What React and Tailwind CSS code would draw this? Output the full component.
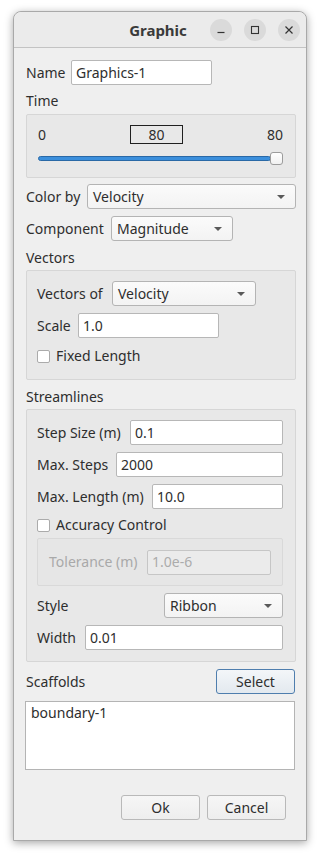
import React from "react";

const FONT = { fontFamily: '"Noto Sans", "Open Sans", sans-serif' };

function Arrow() {
  return (
    <svg width="8" height="4" viewBox="0 0 8 4" className="shrink-0">
      <polygon points="0,0 8,0 4,4" fill="#5a5a5a" />
    </svg>
  );
}

function Combo({ value, className = "" }) {
  return (
    <div
      className={
        "h-[25px] flex items-center justify-between pl-[5px] pr-[10px] rounded-[3px] border border-[#b4b4b4] bg-gradient-to-b from-[#fbfbfb] to-[#f3f3f3] text-[#2e2e2e] " +
        className
      }
    >
      <span>{value}</span>
      <Arrow />
    </div>
  );
}

function Input({ value, className = "" }) {
  return (
    <div
      className={
        "h-[25px] flex items-center pl-[4px] rounded-[2px] border border-[#b7b7b7] bg-white text-[#2e2e2e] " +
        className
      }
    >
      {value}
    </div>
  );
}

function Check({ label }) {
  return (
    <div className="h-[18px] flex items-center gap-[6px]">
      <div className="w-[13px] h-[13px] rounded-[2px] border border-[#ababab] bg-white" />
      <span>{label}</span>
    </div>
  );
}

function Row({ label, labelW, children, className = "" }) {
  return (
    <div className={"flex items-center h-[25px] " + className}>
      <div className={"shrink-0 " + labelW}>{label}</div>
      {children}
    </div>
  );
}

function Btn({ children, className = "" }) {
  return (
    <div
      className={
        "h-[25px] w-[79px] flex items-center justify-center rounded-[3px] border " +
        className
      }
    >
      {children}
    </div>
  );
}

export default function App() {
  return (
    <div className="min-h-screen bg-white pt-[11px] pl-[13px]" style={FONT}>
      <div className="w-[294px] h-[830px] rounded-t-[8px] border border-[#a9a9a9] bg-[#efefef] flex flex-col shadow-[0_2px_9px_rgba(0,0,0,0.35)] text-[14px] leading-[18px] text-[#2e2e2e]">
        {/* title bar */}
        <div className="h-[36px] shrink-0 border-b border-[#c3c3c3] rounded-t-[8px] bg-[#ebebeb] flex items-center">
          <div className="flex-1 pl-[92px] text-center font-bold text-[15px] text-[#3a3a3a]">
            Graphic
          </div>
          <div className="flex items-center gap-[12px] pr-[6px]">
            <div className="w-[22px] h-[22px] rounded-full bg-[#dadada] flex items-center justify-center">
              <svg width="10" height="10" viewBox="0 0 10 10">
                <line x1="1.5" y1="7.5" x2="8.5" y2="7.5" stroke="#333" strokeWidth="1.2" />
              </svg>
            </div>
            <div className="w-[22px] h-[22px] rounded-full bg-[#dadada] flex items-center justify-center">
              <svg width="10" height="10" viewBox="0 0 10 10">
                <rect x="1.5" y="1.5" width="7" height="7" fill="none" stroke="#333" strokeWidth="1.1" />
              </svg>
            </div>
            <div className="w-[22px] h-[22px] rounded-full bg-[#dadada] flex items-center justify-center">
              <svg width="10" height="10" viewBox="0 0 10 10">
                <path d="M1.5 1.5 L8.5 8.5 M8.5 1.5 L1.5 8.5" stroke="#333" strokeWidth="1.2" />
              </svg>
            </div>
          </div>
        </div>

        {/* content */}
        <div className="flex flex-col pl-[12px] pr-[10px]">
          <Row label="Name" labelW="w-[45px]" className="mt-[12px]">
            <Input value="Graphics-1" className="w-[141px] pl-[3px]" />
          </Row>

          <div className="mt-[7px] h-[18px]">Time</div>
          <div className="mt-[4px] h-[64px] border border-[#d6d6d6] rounded-[2px] bg-[#e8e8e8] pt-[10px] pl-[11px] pr-[12px]">
            <div className="flex items-center h-[19px]">
              <div className="w-[92px]">0</div>
              <div className="w-[53px] h-[19px] border border-[#202020] flex items-center justify-center">
                80
              </div>
              <div className="flex-1 text-right">80</div>
            </div>
            <div className="mt-[8px] h-[13px] flex items-center">
              <div className="flex-1 h-[5px] rounded-full bg-[#3b8fdc] border border-[#2a69a6]" />
              <div className="w-[13px] h-[13px] -ml-[1px] rounded-[3px] border border-[#9c9c9c] bg-gradient-to-b from-white to-[#f1f1f1]" />
            </div>
          </div>

          <Row label="Color by" labelW="w-[61px]" className="mt-[6px]">
            <Combo value="Velocity" className="flex-1" />
          </Row>
          <Row label="Component" labelW="w-[85px]" className="mt-[7px]">
            <Combo value="Magnitude" className="w-[122px]" />
          </Row>

          <div className="mt-[8px] h-[18px]">Vectors</div>
          <div className="mt-[3px] h-[110px] border border-[#d6d6d6] rounded-[2px] bg-[#e8e8e8] pt-[10px] pl-[10px] pr-[12px] flex flex-col">
            <Row label="Vectors of" labelW="w-[75px]">
              <Combo value="Velocity" className="w-[144px]" />
            </Row>
            <Row label="Scale" labelW="w-[41px]" className="mt-[7px]">
              <Input value="1.0" className="w-[141px]" />
            </Row>
            <div className="mt-[9px]">
              <Check label="Fixed Length" />
            </div>
          </div>

          <div className="mt-[8px] h-[18px]">Streamlines</div>
          <div className="mt-[3px] h-[253px] border border-[#d6d6d6] rounded-[2px] bg-[#e8e8e8] pt-[10px] pl-[10px] pr-[12px] flex flex-col">
            <Row label="Step Size (m)" labelW="w-[93px]">
              <Input value="0.1" className="flex-1" />
            </Row>
            <Row label="Max. Steps" labelW="w-[79px]" className="mt-[7px]">
              <Input value="2000" className="flex-1" />
            </Row>
            <Row label="Max. Length (m)" labelW="w-[115px]" className="mt-[7px]">
              <Input value="10.0" className="flex-1" />
            </Row>
            <div className="mt-[7px]">
              <Check label="Accuracy Control" />
            </div>
            <div className="mt-[4px] h-[48px] border border-[#d9d9d9] rounded-[2px] bg-[#e6e6e6] flex items-center pl-[11px] pr-[11px]">
              <div className="w-[98px] shrink-0 text-[#a9a9a9]">Tolerance (m)</div>
              <div className="flex-1 h-[25px] flex items-center pl-[4px] rounded-[2px] border border-[#c6c6c6] bg-[#ebebeb] text-[#acacac]">
                1.0e-6
              </div>
            </div>
            <div className="mt-[7px] h-[25px] flex items-center justify-between">
              <span>Style</span>
              <Combo value="Ribbon" className="w-[119px]" />
            </div>
            <Row label="Width" labelW="w-[48px]" className="mt-[7px]">
              <Input value="0.01" className="flex-1" />
            </Row>
          </div>

          <div className="mt-[7px] h-[25px] flex items-center justify-between">
            <span>Scaffolds</span>
            <Btn className="mr-px border-[#4f7eae] bg-gradient-to-b from-[#f3f6f9] to-[#e3e9ef]">Select</Btn>
          </div>
          <div className="mt-[7px] h-[69px] -ml-px mr-px border border-[#b4b4b4] bg-white pl-[5px] pt-[2px]">
            boundary-1
          </div>

          <div className="mt-[25px] flex justify-end gap-[7px] pr-[10px]">
            <Btn className="border-[#b9b9b9] bg-gradient-to-b from-[#f6f6f6] to-[#eeeeee]">Ok</Btn>
            <Btn className="border-[#b9b9b9] bg-gradient-to-b from-[#f6f6f6] to-[#eeeeee]">Cancel</Btn>
          </div>
        </div>
      </div>
    </div>
  );
}
